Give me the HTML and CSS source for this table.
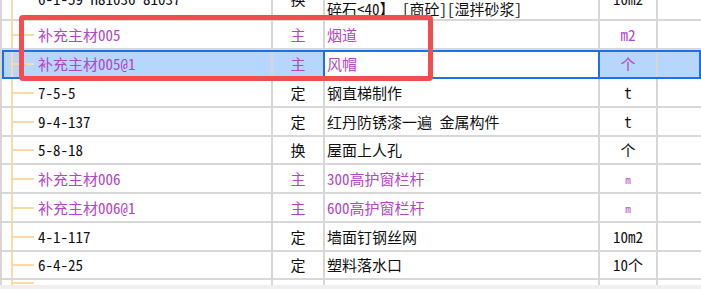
FILE: index.html
```html
<!DOCTYPE html>
<html lang="zh-CN">
<head>
<meta charset="utf-8">
<title>Items</title>
<link rel="stylesheet" href="styles.css">
</head>
<body>
<div class="screen">
  <div class="table">
    <div class="row row-tall">
      <div class="cell code">6-1-59 H81036 81037</div>
      <div class="cell type">换</div>
      <div class="cell desc two"><span>现浇混凝土 构造柱【C20 砾石</span><span>碎石&lt;40】 [商砼][湿拌砂浆]</span></div>
      <div class="cell unit">10m2</div>
      <div class="cell extra"></div>
    </div>
    <div class="row main">
      <div class="cell code">补充主材005</div>
      <div class="cell type">主</div>
      <div class="cell desc">烟道</div>
      <div class="cell unit">m2</div>
      <div class="cell extra"></div>
    </div>
    <div class="row main sel">
      <div class="cell code">补充主材005@1</div>
      <div class="cell type">主</div>
      <div class="cell desc">风帽</div>
      <div class="cell unit">个</div>
      <div class="cell extra"></div>
    </div>
    <div class="row">
      <div class="cell code">7-5-5</div>
      <div class="cell type">定</div>
      <div class="cell desc">钢直梯制作</div>
      <div class="cell unit">t</div>
      <div class="cell extra"></div>
    </div>
    <div class="row">
      <div class="cell code">9-4-137</div>
      <div class="cell type">定</div>
      <div class="cell desc">红丹防锈漆一遍 金属构件</div>
      <div class="cell unit">t</div>
      <div class="cell extra"></div>
    </div>
    <div class="row short">
      <div class="cell code">5-8-18</div>
      <div class="cell type">换</div>
      <div class="cell desc">屋面上人孔</div>
      <div class="cell unit">个</div>
      <div class="cell extra"></div>
    </div>
    <div class="row main">
      <div class="cell code">补充主材006</div>
      <div class="cell type">主</div>
      <div class="cell desc">300高护窗栏杆</div>
      <div class="cell unit small">m</div>
      <div class="cell extra"></div>
    </div>
    <div class="row main">
      <div class="cell code">补充主材006@1</div>
      <div class="cell type">主</div>
      <div class="cell desc">600高护窗栏杆</div>
      <div class="cell unit small">m</div>
      <div class="cell extra"></div>
    </div>
    <div class="row">
      <div class="cell code">4-1-117</div>
      <div class="cell type">定</div>
      <div class="cell desc">墙面钉钢丝网</div>
      <div class="cell unit">10m2</div>
      <div class="cell extra"></div>
    </div>
    <div class="row short">
      <div class="cell code">6-4-25</div>
      <div class="cell type">定</div>
      <div class="cell desc">塑料落水口</div>
      <div class="cell unit">10个</div>
      <div class="cell extra"></div>
    </div>
    <div class="row stub">
      <div class="cell code"></div>
      <div class="cell type"></div>
      <div class="cell desc"></div>
      <div class="cell unit"></div>
      <div class="cell extra"></div>
    </div>
  </div>
  <div class="hscroll"></div>
  <div class="mark"></div>
</div>
</body>
</html>
```

FILE: styles.css
```css
html, body {
  margin: 0;
  padding: 0;
  background: #ffffff;
}

.screen {
  position: relative;
  width: 701px;
  height: 289px;
  overflow: hidden;
  font-family: "Noto Sans Mono CJK SC", "Noto Sans CJK SC", sans-serif;
  font-size: 15px;
  color: #111111;
}

.table {
  border-left: 2px solid #d6d6d6;
}

.row {
  display: grid;
  grid-template-columns: 271px 52px 275px 58px 1fr;
  height: 29px;
  box-sizing: border-box;
  border-bottom: 2px solid #d8d8d8;
}

.row.short {
  height: 28px;
}

.row.row-tall {
  height: 42px;
  margin-top: -21px;
}

.row.stub {
  height: 5px;
  border-bottom: none;
}

.cell {
  display: flex;
  align-items: center;
  box-sizing: border-box;
  border-right: 2px solid #d6d6d6;
  white-space: nowrap;
  overflow: hidden;
  line-height: 20px;
}

.code {
  padding-left: 36px;
  background-image: linear-gradient(#fcd9a6, #fcd9a6), linear-gradient(#fcd9a6, #fcd9a6);
  background-size: 2px 100%, 21px 2px;
  background-position: 9px 0, 11px 50%;
  background-repeat: no-repeat;
}

.type {
  justify-content: center;
}

.desc {
  padding-left: 2px;
}

.desc.two {
  flex-direction: column;
  align-items: flex-start;
  justify-content: center;
}

.unit {
  justify-content: center;
}

.unit.small {
  font-size: 11px;
}

.extra {
  border-right: none;
}

.main .cell {
  color: #b445c6;
}

.row.sel {
  background-color: #b7d6fb;
  outline: 2px solid #1d6fee;
  outline-offset: -2px;
}

.row.sel .type {
  border-right-color: #1d6fee;
}

.row.sel .desc {
  background-color: #ffffff;
  border-right-color: #1d6fee;
}

.hscroll {
  height: 12px;
  background: #efefef;
}

.mark {
  position: absolute;
  left: 19px;
  top: 15px;
  width: 414px;
  height: 66px;
  box-sizing: border-box;
  border: 5px solid #f24d4f;
  border-radius: 4px;
}
```
